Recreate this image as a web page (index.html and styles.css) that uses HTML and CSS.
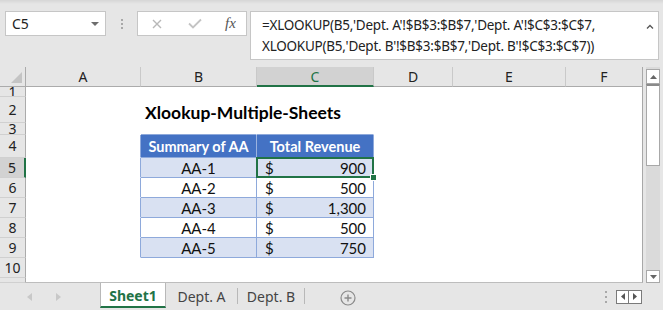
FILE: index.html
```html
<!DOCTYPE html>
<html>
<head>
<meta charset="utf-8">
<link rel="stylesheet" href="styles.css">
</head>
<body>
<div class="app">
  <div class="fbar">
    <div class="namebox"><span class="ref">C5</span><span class="dd"></span></div>
    <div class="vdots"><i></i><i></i><i></i></div>
    <div class="fnbox">
      <svg class="ico-x" width="10" height="10" viewBox="0 0 10 10"><path d="M1 1L9 9M9 1L1 9" stroke="#b8b8b8" stroke-width="1.4" fill="none"/></svg>
      <svg class="ico-ok" width="14" height="11" viewBox="0 0 14 11"><path d="M1 5.5L5 9.5L13 1.5" stroke="#c4c4c4" stroke-width="1.8" fill="none"/></svg>
      <span class="fx">fx</span>
    </div>
    <div class="formula">
      <div class="ftext">=XLOOKUP(B5,'Dept. A'!$B$3:$B$7,'Dept. A'!$C$3:$C$7,<br>XLOOKUP(B5,'Dept. B'!$B$3:$B$7,'Dept. B'!$C$3:$C$7))</div>
      <svg class="caret" width="8" height="5" viewBox="0 0 8 5"><path d="M1 4.5L4 1.5L7 4.5" stroke="#555" stroke-width="1.3" fill="none"/></svg>
    </div>
  </div>

  <div class="main">
    <div class="grid">
      <div class="row hdr">
        <div class="rh corner"><svg width="11" height="11" viewBox="0 0 11 11"><path d="M11 0V11H0Z" fill="#c4c4c4"/></svg></div>
        <div class="ch ca">A</div>
        <div class="ch cb">B</div>
        <div class="ch cc sel">C</div>
        <div class="ch cd">D</div>
        <div class="ch ce">E</div>
        <div class="ch cf">F</div>
      </div>
      <div class="row r1"><div class="rh">1</div><div class="c rest"></div></div>
      <div class="row r2"><div class="rh">2</div><div class="c ca"></div><div class="c cb title">Xlookup-Multiple-Sheets</div><div class="c rest"></div></div>
      <div class="row r3"><div class="rh">3</div><div class="c ca"></div><div class="c cb tt"></div><div class="c cc tt"></div><div class="c rest"></div></div>
      <div class="row r4"><div class="rh">4</div><div class="c ca tl"></div><div class="c cb th">Summary of AA</div><div class="c cc th">Total Revenue</div><div class="c rest"></div></div>
      <div class="row rn"><div class="rh rsel">5</div><div class="c ca tl"></div><div class="c cb td band">AA-1</div><div class="c cc td band cur"><span>$</span><span>900</span><div class="selbox"><i class="handle"></i></div></div><div class="c rest"></div></div>
      <div class="row rn"><div class="rh">6</div><div class="c ca tl"></div><div class="c cb td">AA-2</div><div class="c cc td"><span>$</span><span>500</span></div><div class="c rest"></div></div>
      <div class="row rn"><div class="rh">7</div><div class="c ca tl"></div><div class="c cb td band">AA-3</div><div class="c cc td band"><span>$</span><span>1,300</span></div><div class="c rest"></div></div>
      <div class="row rn"><div class="rh">8</div><div class="c ca tl"></div><div class="c cb td">AA-4</div><div class="c cc td"><span>$</span><span>500</span></div><div class="c rest"></div></div>
      <div class="row rn"><div class="rh">9</div><div class="c ca tl"></div><div class="c cb td band">AA-5</div><div class="c cc td band"><span>$</span><span>750</span></div><div class="c rest"></div></div>
      <div class="row rn"><div class="rh">10</div><div class="c rest"></div></div>
      <div class="row r11"><div class="rh"></div><div class="c rest"></div></div>
    </div>
    <div class="vscroll">
      <div class="sbtn up"><svg width="7" height="4" viewBox="0 0 7 4"><path d="M0 4L3.5 0L7 4Z" fill="#666"/></svg></div>
      <div class="thumb"></div>
      <div class="track"></div>
      <div class="sbtn down"><svg width="7" height="4" viewBox="0 0 7 4"><path d="M0 0L3.5 4L7 0Z" fill="#666"/></svg></div>
    </div>
  </div>

  <div class="tabs">
    <div class="nav">
      <svg width="5" height="8" viewBox="0 0 5 8"><path d="M5 0V8L0 4Z" fill="#c8c8c8"/></svg>
      <svg width="5" height="8" viewBox="0 0 5 8"><path d="M0 0V8L5 4Z" fill="#c8c8c8"/></svg>
    </div>
    <div class="tab active">Sheet1</div>
    <div class="tab">Dept. A</div>
    <div class="tab">Dept. B</div>
    <div class="addsheet"><svg width="16" height="16" viewBox="0 0 16 16"><circle cx="8" cy="8" r="7" stroke="#8a8a8a" stroke-width="1.2" fill="none"/><path d="M8 4.5V11.5M4.5 8H11.5" stroke="#8a8a8a" stroke-width="1.4"/></svg></div>
    <div class="spacer"></div>
    <div class="vdots small"><i></i><i></i><i></i></div>
    <div class="harrows">
      <div class="ha"><svg width="4" height="7" viewBox="0 0 4 7"><path d="M4 0V7L0 3.5Z" fill="#555"/></svg></div>
      <div class="ha"><svg width="4" height="7" viewBox="0 0 4 7"><path d="M0 0V7L4 3.5Z" fill="#555"/></svg></div>
    </div>
  </div>
</div>
</body>
</html>
```

FILE: styles.css
```css
* { box-sizing: border-box; }
html, body { margin: 0; padding: 0; }
body {
  width: 663px;
  height: 310px;
  overflow: hidden;
  background: #e6e6e6;
  font-family: "Noto Sans", "Open Sans", sans-serif;
  color: #222;
}
.app { width: 663px; height: 310px; display: flex; flex-direction: column; }

/* formula bar */
.fbar {
  height: 67px;
  display: flex;
  align-items: flex-start;
  padding: 11px 0 0 5px;
  background: linear-gradient(#d6d6d6 0, #e6e6e6 4px);
}
.namebox {
  width: 101px; height: 25px;
  background: #fff; border: 1px solid #c6c6c6;
  display: flex; align-items: center; justify-content: space-between;
  padding: 0 6px 0 6px;
}
.ref { font-size: 14px; color: #222; }
.dd {
  width: 0; height: 0;
  border-left: 4px solid transparent; border-right: 4px solid transparent;
  border-top: 4px solid #6d6d6d;
}
.vdots {
  width: 31px; height: 25px;
  display: flex; flex-direction: column; align-items: center; justify-content: center; gap: 2px;
}
.vdots i { display: block; width: 2px; height: 2px; background: #a8a8a8; }
.fnbox {
  width: 110px; height: 25px;
  background: #fff; border: 1px solid #c6c6c6;
  display: flex; align-items: center;
  padding-left: 14px;
}
.ico-x { margin-right: 26px; }
.ico-ok { margin-right: 23px; }
.fx { font-family: "Liberation Serif", serif; font-style: italic; font-size: 15px; color: #555; }
.formula {
  margin-left: 3px;
  width: 409px; height: 49px;
  background: #fff; border: 1px solid #c6c6c6;
  display: flex; justify-content: space-between; align-items: flex-start;
  padding: 3px 4px 0 11px;
}
.ftext { font-size: 13.5px; line-height: 21px; color: #222; letter-spacing: -0.25px; }
.caret { margin-top: 9px; }

/* grid */
.main { height: 216px; display: flex; }
.grid { width: 643px; background: #fff; display: flex; flex-direction: column; border-bottom: 1px solid #bdbdbd; border-right: 1px solid #a8a8a8; }
.row { display: flex; flex: none; }
.hdr { height: 20px; background: #e6e6e6; }
.r1 { height: 10px; }
.r2 { height: 26px; }
.r3 { height: 12px; }
.r4 { height: 23px; }
.rn { height: 20px; }
.r11 { height: 5px; }

.rh {
  width: 26px; flex: none;
  background: #e6e6e6;
  border-right: 1px solid #ababab;
  border-bottom: 1px solid #d0d0d0;
  font-size: 14px; color: #222;
  display: flex; align-items: center; justify-content: center;
  overflow: hidden; line-height: 18px;
}
.corner { align-items: flex-end; justify-content: flex-end; padding: 0 3px 3px 0; border-bottom: 1px solid #ababab; }
.rsel { background: #d2d2d2; border-right: 2px solid #217346; }

.ch {
  border-right: 1px solid #c9c9c9;
  border-bottom: 1px solid #ababab;
  font-size: 14px; color: #222;
  display: flex; align-items: center; justify-content: center;
}
.ch.sel { background: #d2d2d2; border-bottom: 2px solid #217346; color: #217346; }
.ca { width: 115px; flex: none; }
.cb { width: 116px; flex: none; }
.cc { width: 117px; flex: none; }
.cd { width: 79px; flex: none; }
.ce { width: 113px; flex: none; }
.cf { flex: 1; border-right: none; }
.rest { flex: 1; }

.c {
  border-right: 1px solid transparent;
  border-bottom: 1px solid transparent;
  font-family: "Lato", "Open Sans", sans-serif;
  font-size: 15px; color: #111;
}
.title {
  font-weight: 700; font-size: 17.5px;
  white-space: nowrap; overflow: visible;
  padding: 5px 0 0 4px;
  color: #000;
}
.tt { border-bottom-color: #8ea9db; }
.tl { border-right-color: #8ea9db; }
.th {
  background: #4472c4; color: #fff; font-weight: 700; font-size: 14.5px;
  border-right-color: #8ea9db; border-bottom-color: #8ea9db;
  display: flex; align-items: flex-end; justify-content: center; padding-bottom: 2px;
}
.th.cb { border-right-color: #9bb3e0; }
.td {
  border-right-color: #8ea9db; border-bottom-color: #8ea9db;
  display: flex; align-items: center; justify-content: center;
}
.td.cc { justify-content: space-between; padding: 0 7px 0 8px; }
.band { background: #d9e1f2; }
.cur { position: relative; }
.selbox {
  position: absolute; left: -1px; top: -1px; right: -1px; bottom: -1px;
  border: 2px solid #217346;
}
.handle {
  position: absolute; right: -5px; bottom: -5px;
  width: 7px; height: 7px; background: #217346; border: 1px solid #fff;
}

/* vertical scrollbar */
.vscroll { width: 14px; margin-left: 3px; display: flex; flex-direction: column; padding-top: 2px; background: #dadada; }
.sbtn { height: 15px; background: #fff; border: 1px solid #a8a8a8; display: flex; align-items: center; justify-content: center; }
.thumb { height: 82px; background: #fff; border: 1px solid #a8a8a8; border-top: 2px solid #8a8a8a; }
.track { flex: 1; }
.sbtn.down { height: 13px; }

/* tabs */
.tabs { height: 27px; display: flex; align-items: stretch; font-size: 14px; }
.nav { width: 100px; display: flex; align-items: center; gap: 24px; padding-left: 27px; }
.tab {
  display: flex; align-items: center; justify-content: center;
  color: #444; position: relative;
}
.tab:nth-of-type(2) { width: 66px; }
.tab:nth-of-type(3) { width: 71px; }
.tab:nth-of-type(4) { width: 68px; }
.tab + .tab::before {
  content: ""; position: absolute; left: 0; top: 5px; bottom: 6px; width: 1px; background: #b8b8b8;
}
.tab:nth-of-type(4)::after {
  content: ""; position: absolute; right: 0; top: 5px; bottom: 6px; width: 1px; background: #b8b8b8;
}
.tab.active {
  background: #fff; color: #217346; font-weight: 700;
  border-left: 1px solid #b8b8b8; border-right: 1px solid #b8b8b8;
  border-bottom: 2px solid #217346;
  margin-bottom: 2px;
  padding-top: 1px;
}
.tab.active + .tab::before { display: none; }
.addsheet { width: 86px; display: flex; align-items: center; justify-content: center; padding-top: 2px; }
.spacer { flex: 1; }
.vdots.small { width: 12px; height: auto; gap: 3px; }
.harrows { display: flex; align-items: center; margin: 0 21px 0 4px; }
.ha { width: 13px; height: 14px; border: 1px solid #7a7a7a; background: #fff; display: flex; align-items: center; justify-content: center; }
.ha + .ha { border-left: none; }
```
